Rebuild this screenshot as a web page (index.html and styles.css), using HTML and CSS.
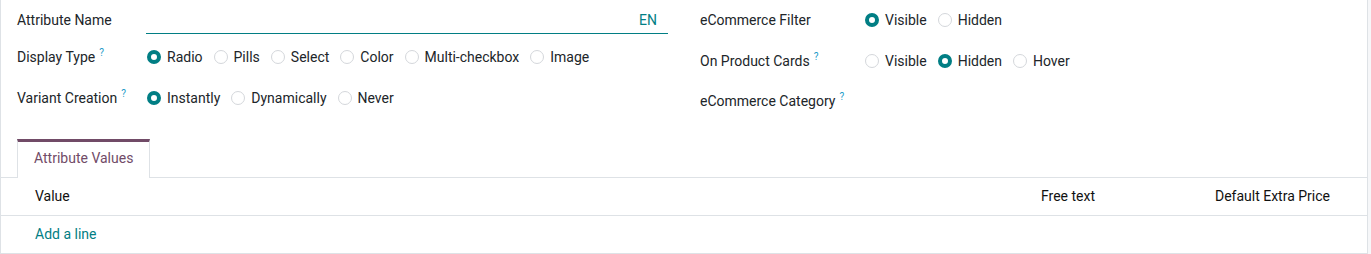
FILE: index.html
```html
<!DOCTYPE html>
<html lang="en">
<head>
  <meta charset="UTF-8">
  <title>Attribute</title>
  <link rel="stylesheet" href="styles.css">
</head>
<body>
  <div class="sheet">
    <div class="groups">
      <!-- left group -->
      <div class="group group-left">
        <div class="label">Attribute Name</div>
        <div class="field"><div class="input"><span class="lang">EN</span></div></div>

        <div class="label">Display Type<sup>?</sup></div>
        <div class="field radios">
          <span class="radio checked"></span><span class="opt">Radio</span>
          <span class="radio"></span><span class="opt">Pills</span>
          <span class="radio"></span><span class="opt">Select</span>
          <span class="radio"></span><span class="opt">Color</span>
          <span class="radio"></span><span class="opt">Multi-checkbox</span>
          <span class="radio"></span><span class="opt">Image</span>
        </div>

        <div class="label">Variant Creation<sup>?</sup></div>
        <div class="field radios">
          <span class="radio checked"></span><span class="opt">Instantly</span>
          <span class="radio"></span><span class="opt">Dynamically</span>
          <span class="radio"></span><span class="opt">Never</span>
        </div>
      </div>

      <!-- right group -->
      <div class="group group-right">
        <div class="label">eCommerce Filter</div>
        <div class="field radios">
          <span class="radio checked"></span><span class="opt">Visible</span>
          <span class="radio"></span><span class="opt">Hidden</span>
        </div>

        <div class="label">On Product Cards<sup>?</sup></div>
        <div class="field radios">
          <span class="radio"></span><span class="opt">Visible</span>
          <span class="radio checked"></span><span class="opt">Hidden</span>
          <span class="radio"></span><span class="opt">Hover</span>
        </div>

        <div class="label">eCommerce Category<sup>?</sup></div>
        <div class="field"></div>
      </div>
    </div>

    <div class="notebook">
      <ul class="tabs">
        <li class="tab active">Attribute Values</li>
      </ul>
      <table class="list">
        <colgroup><col class="c-value"><col class="c-free"><col class="c-price"></colgroup>
        <thead>
          <tr><th>Value</th><th>Free text</th><th class="right">Default Extra Price</th></tr>
        </thead>
        <tbody>
          <tr><td colspan="3" class="add-line"><a>Add a line</a></td></tr>
        </tbody>
      </table>
    </div>
  </div>
</body>
</html>
```

FILE: styles.css
```css
* { margin:0; padding:0; box-sizing:border-box; }
body { font-family: Roboto, "Liberation Sans", sans-serif; font-size:14px; color:#212529; background:#f6f7f9; height:254px; overflow:hidden; }

.sheet { width:1368px; height:254px; background:#fff; border-left:1px solid #dee2e6; border-right:1px solid #dee2e6; border-bottom:1px solid #dee2e6; }

/* groups */
.groups { display:flex; gap:32px; padding:6px 0 0 16px; }
.group { display:grid; align-items:center; }
.group-left { width:651px; grid-template-columns:129px 1fr; grid-template-rows:28px 46px 36px; }
.group-right { width:500px; grid-template-columns:164px 1fr; grid-template-rows:28px 54px 26px; }

.label { white-space:nowrap; }
.label sup { font-size:10px; color:#219bc8; margin-left:4px; vertical-align:6px; line-height:0; }

.field { height:100%; display:flex; align-items:center; }
.input { width:100%; height:28px; border-bottom:1px solid #017e84; display:flex; align-items:center; justify-content:flex-end; padding-right:11px; }
.lang { color:#017e84; }

.radio { width:14px; height:14px; border-radius:50%; border:1px solid #d4d7db; background:#fff; margin-left:1px; margin-right:6px; flex:none; }
.radio.checked { border:4px solid #017e84; }
.opt { margin-right:10px; white-space:nowrap; }

/* notebook */
.notebook { margin-top:23px; }
.tabs { list-style:none; display:flex; padding-left:16px; border-bottom:1px solid #dee2e6; }
.tab { height:39px; margin-bottom:-1px; padding:0 16px 5px; display:flex; align-items:center; color:#714b67; background:#fff; border:1px solid #dee2e6; border-top:3px solid #714b67; border-bottom:none; }

.list { width:100%; border-collapse:collapse; table-layout:fixed; }
.c-value { width:1040px; }
.c-free { width:150px; }
.list th { height:37px; text-align:left; font-weight:normal; color:#111; border-bottom:1px solid #dee2e6; padding:0; }
.list th:first-child { padding-left:34px; }
.list th.right { text-align:right; padding-right:37px; }
.add-line { height:37px; padding-left:34px; }
.add-line a { color:#017e84; cursor:pointer; }
```
